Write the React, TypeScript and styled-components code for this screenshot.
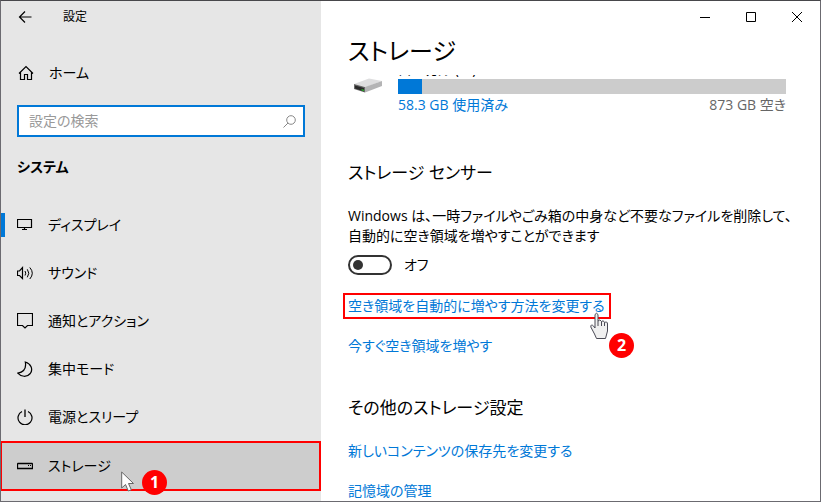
import React from "react";
import styled, { createGlobalStyle, css } from "styled-components";

const GlobalStyle = createGlobalStyle`
  *, *::before, *::after { box-sizing: border-box; }
  body {
    margin: 0;
    background: #fff;
    color: #000;
    font: 400 14px/20px "Open Sans", "Noto Sans CJK JP", sans-serif;
    font-feature-settings: "palt";
  }
  button, input { font: inherit; font-feature-settings: inherit; color: inherit; }
  h1, h2, p, ul { margin: 0; padding: 0; font-weight: 400; }
`;

const Window = styled.div`
  display: grid;
  grid-template-columns: 320px minmax(0, 1fr);
  height: 100vh;
  border: 1px solid #6b6a70;
  border-top-color: #48474b;
  overflow: hidden;
`;

const Sidebar = styled.aside`
  display: flex;
  flex-direction: column;
  background: #e6e6e6;
`;

const TitleBar = styled.header`
  display: flex;
  align-items: center;
  gap: 28px;
  height: 32px;
  padding-left: 14px;
  font-size: 12px;
`;

const IconButton = styled.button`
  display: grid;
  place-items: center;
  width: 20px;
  height: 32px;
  padding: 0;
  border: 0;
  background: none;
`;

const CaptionBar = styled.header`
  display: flex;
  justify-content: flex-end;
  height: 32px;
`;

const CaptionButton = styled(IconButton)`
  width: 46px;
`;

const HomeLink = styled.a`
  display: flex;
  align-items: center;
  gap: 15px;
  height: 48px;
  margin-top: 16px;
  padding-left: 17px;
  color: inherit;
  text-decoration: none;
`;

const SearchBox = styled.label`
  display: flex;
  align-items: center;
  height: 32px;
  margin: 8px 16px 0;
  padding: 0 7px 0 10px;
  border: 2px solid #0078d7;
  background: #fff;
`;

const SearchInput = styled.input`
  flex: 1;
  min-width: 0;
  padding: 0;
  border: 0;
  outline: 0;
  background: none;
  &::placeholder { color: #999; opacity: 1; }
`;

const GroupTitle = styled.h2`
  margin: 20px 16px 24px;
  font-size: 14px;
  line-height: 20px;
  font-weight: 700;
`;

const NavList = styled.ul`
  list-style: none;
`;

const NavItem = styled.li`
  position: relative;
`;

const NavLink = styled.a<{ $current?: boolean; $marked?: boolean }>`
  display: flex;
  align-items: center;
  gap: 15px;
  height: 48px;
  padding-left: 16px;
  color: inherit;
  text-decoration: none;
  ${(p) => p.$current && css`
    padding-left: 12px;
    border-left: 4px solid transparent;
    background: linear-gradient(#0078d7, #0078d7) left center / 4px 24px no-repeat border-box;
  `}
  ${(p) => p.$marked && css`
    height: 50px;
    margin-left: -1px;
    padding-left: 15px;
    border: 2px solid #f00;
    background: #cdcdcd;
  `}
`;

const Badge = styled.span<{ $left: number; $top: number }>`
  position: absolute;
  left: ${(p) => p.$left}px;
  top: ${(p) => p.$top}px;
  width: 25px;
  height: 25px;
  border-radius: 50%;
  background: #f00;
  color: #fff;
  font: 700 16px/25px "Noto Sans", sans-serif;
  text-align: center;
`;

const Pointer = styled.svg<{ $left: number; $top: number }>`
  position: absolute;
  left: ${(p) => p.$left}px;
  top: ${(p) => p.$top}px;
`;

const Main = styled.main`
  min-width: 0;
  background: #fff;
`;

const Content = styled.div`
  padding: 0 24px 0 27px;
`;

const PageTitle = styled.h1`
  font-size: 24px;
  line-height: 36px;
`;

const Drive = styled.section`
  display: grid;
  grid-template-columns: 30px minmax(0, 1fr);
  column-gap: 20px;
  margin: 6px 10px 0 0;
`;

const DriveIcon = styled.svg`
  margin: 3px 0 0 5px;
`;

const DriveName = styled.div`
  display: flex;
  align-items: flex-end;
  height: 2px;
  margin-bottom: 2px;
  overflow: hidden;
  line-height: 14px;
`;

const Meter = styled.div`
  height: 15px;
  background: #cccccc;
`;

const MeterFill = styled.div`
  height: 100%;
  background: #0078d7;
`;

const Usage = styled.div`
  display: flex;
  justify-content: space-between;
  margin-top: 1px;
  color: #666;
`;

const Used = styled.span`
  color: #0078d7;
`;

const SectionTitle = styled.h2<{ $gap: number }>`
  margin-top: ${(p) => p.$gap}px;
  font-size: 17px;
  line-height: 28px;
`;

const Description = styled.p`
  margin-top: 19px;
`;

const ToggleRow = styled.label`
  display: flex;
  align-items: center;
  gap: 12px;
  height: 20px;
  margin-top: 9px;
`;

const Toggle = styled.input`
  appearance: none;
  display: flex;
  align-items: center;
  width: 44px;
  height: 20px;
  margin: 0;
  padding-left: 3px;
  border: 2px solid #333;
  border-radius: 10px;
  &::before {
    content: "";
    width: 10px;
    height: 10px;
    border-radius: 50%;
    background: #333;
  }
`;

const LinkList = styled.ul<{ $gap: number }>`
  display: flex;
  flex-direction: column;
  align-items: flex-start;
  gap: 20px;
  margin-top: ${(p) => p.$gap}px;
  list-style: none;
`;

const LinkItem = styled.li`
  position: relative;
`;

const TextLink = styled.a<{ $marked?: boolean }>`
  display: block;
  color: #0078d7;
  text-decoration: none;
  ${(p) => p.$marked && css`
    margin: -3px -5px;
    padding: 1px 4px 1px 3px;
    border: 2px solid #f00;
  `}
`;

const Icon = ({ size = 16, children }: { size?: number; children: React.ReactNode }) => (
  <svg width={size} height={size} viewBox={`0 0 ${size} ${size}`} fill="none" stroke="currentColor" aria-hidden="true">
    {children}
  </svg>
);

const navItems = [
  {
    label: "ディスプレイ",
    current: true,
    icon: <path d="M.5 2.500h14v8H.5zM7.500 10.500v2M5 12.500h5" strokeWidth="1.200" />,
  },
  {
    label: "サウンド",
    icon: <><path d="M.5 6v4.500h2l3 3v-11l-3 3.500z" strokeWidth="1.200" /><path d="M8 6q1.500 2.200 0 4.500M10.300 4.300q3 3.900 0 8M12.800 2.500q5 5.700 0 11.500" /></>,
  },
  {
    label: "通知とアクション",
    icon: <path d="M.5.5h15v12h-5l-2.500 2.500-2.500-2.500h-5z" strokeWidth="1.200" />,
  },
  {
    label: "集中モード",
    icon: <path d="M8.300 1C9.500 7 6.500 11 .8 12.200 4 16 10 16.500 13.300 12.500 16.300 8.500 14 2.500 8.300 1z" strokeWidth="1.200" />,
  },
  {
    label: "電源とスリープ",
    icon: <><path d="M5 2.500a7 7 0 1 0 6 0" strokeWidth="1.200" /><path d="M8 .5v7.500" strokeWidth="1.300" /></>,
  },
  {
    label: "ストレージ",
    marked: true,
    icon: <><path d="M1 5.500h14l.5.5v4.500H.5V6z" strokeWidth="1.300" /><path d="M11 7.500h1M13 7.500h1" /></>,
  },
];

export default function App() {
  return (
    <>
      <GlobalStyle />
      <Window>
        <Sidebar>
          <TitleBar>
            <IconButton aria-label="戻る">
              <Icon><path d="M14.500 8H2.500M8 2.500 2.500 8 8 13.500" strokeWidth="1.200" /></Icon>
            </IconButton>
            設定
          </TitleBar>
          <HomeLink href="#home">
            <Icon><path d="M1 8.500 8 1.500l7 7M2.500 7v7.500H6.500v-5h3v5h4V7" strokeWidth="1.200" /></Icon>
            ホーム
          </HomeLink>
          <SearchBox>
            <SearchInput type="text" placeholder="設定の検索" aria-label="設定の検索" />
            <svg width="13" height="13" viewBox="0 0 13 13" fill="none" stroke="#888" aria-hidden="true">
              <circle cx="8" cy="5" r="4.300" />
              <path d="M5 8 .5 12.500" />
            </svg>
          </SearchBox>
          <GroupTitle>システム</GroupTitle>
          <NavList>
            {navItems.map((item) => (
              <NavItem key={item.label}>
                <NavLink href="#" $current={item.current} $marked={item.marked}>
                  <Icon>{item.icon}</Icon>
                  {item.label}
                </NavLink>
                {item.marked && (
                  <>
                    <Pointer $left={120} $top={30} width="14" height="22" viewBox="0 0 14 22" aria-hidden="true">
                      <path d="M.7 1v16l3.800-3.500 2.800 6.500 3-1.300-2.800-6.200h5z" fill="#fff" stroke="#666" />
                    </Pointer>
                    <Badge $left={141} $top={29}>1</Badge>
                  </>
                )}
              </NavItem>
            ))}
          </NavList>
        </Sidebar>
        <Main>
          <CaptionBar>
            <CaptionButton aria-label="最小化"><Icon size={10}><path d="M0 5.500h10" /></Icon></CaptionButton>
            <CaptionButton aria-label="最大化"><Icon size={10}><path d="M.5.5h9v9h-9z" /></Icon></CaptionButton>
            <CaptionButton aria-label="閉じる"><Icon size={10}><path d="m0 0 10 10M10 0 0 10" /></Icon></CaptionButton>
          </CaptionBar>
          <Content>
            <PageTitle>ストレージ</PageTitle>
            <Drive>
              <DriveIcon width="30" height="16" viewBox="0 0 30 16" aria-hidden="true">
                <path d="M1 6 16 .5 29 3 13 9z" fill="#dededf" />
                <path d="M12 9 29 3v5L12 14.500z" fill="#b4b4b5" />
                <path d="m1 6 11 3v5.500L1 11z" fill="#6a6a6a" />
                <path d="m2 7.500 9 2.500v3.500L2 10.500z" fill="#2a2a2a" />
                <path d="m8.500 11 2.500.8v1.500l-2.500-.8z" fill="#2aa52a" />
              </DriveIcon>
              <div>
                <DriveName>ローカル (C:)</DriveName>
                <Meter><MeterFill style={{ width: `${(58.3 / 931.3) * 100}%` }} /></Meter>
                <Usage><Used>58.3 GB 使用済み</Used><span>873 GB 空き</span></Usage>
              </div>
            </Drive>
            <SectionTitle $gap={44}>ストレージ センサー</SectionTitle>
            <Description>
              Windows は、一時ファイルやごみ箱の中身など不要なファイルを削除して、自動的に空き領域を増やすことができます
            </Description>
            <ToggleRow><Toggle type="checkbox" role="switch" />オフ</ToggleRow>
            <LinkList $gap={21}>
              <LinkItem>
                <TextLink href="#" $marked>空き領域を自動的に増やす方法を変更する</TextLink>
                <Pointer $left={242} $top={16} width="20" height="28" viewBox="0 0 20 28" aria-hidden="true">
                  <path d="M5 16V2.500Q6.500 0 8 2.500V9Q10 6.500 11.500 9.500 13.500 7.500 14.500 10.500 17.500 9 17.500 12V19L15.500 26.500H6.500L4.500 22 .8 15Q.8 11.500 3.500 14z" fill="#f0f0f0" stroke="#4a4a55" />
                  <path d="M8 9v5M11.500 9.500V14M14.500 10.500V14" fill="none" stroke="#4a4a55" />
                </Pointer>
                <Badge $left={261} $top={37}>2</Badge>
              </LinkItem>
              <LinkItem><TextLink href="#">今すぐ空き領域を増やす</TextLink></LinkItem>
            </LinkList>
            <SectionTitle $gap={38}>その他のストレージ設定</SectionTitle>
            <LinkList $gap={19}>
              <LinkItem><TextLink href="#">新しいコンテンツの保存先を変更する</TextLink></LinkItem>
              <LinkItem><TextLink href="#">記憶域の管理</TextLink></LinkItem>
            </LinkList>
          </Content>
        </Main>
      </Window>
    </>
  );
}
